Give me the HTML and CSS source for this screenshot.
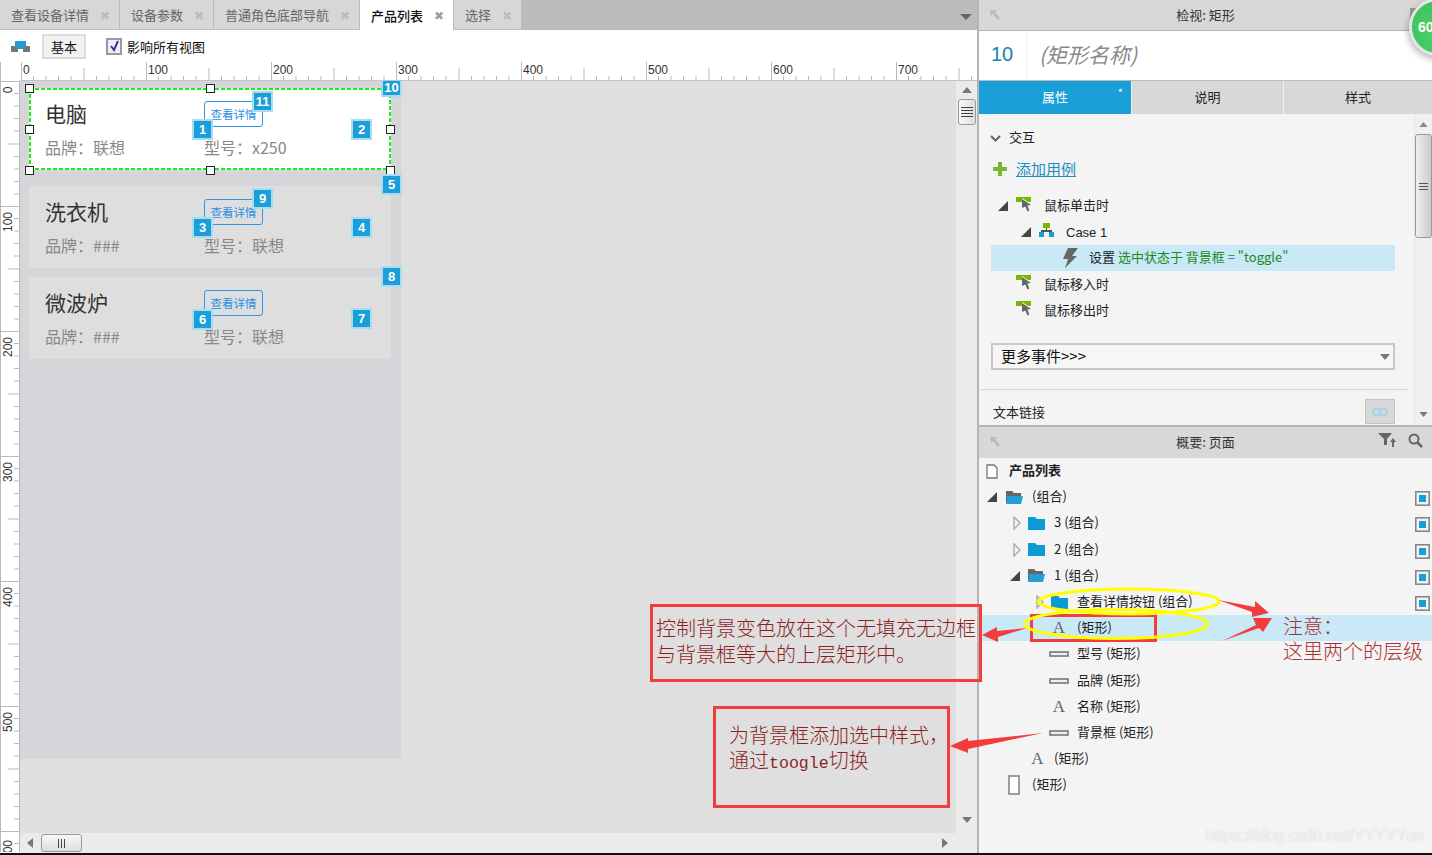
FILE: index.html
```html
<!DOCTYPE html>
<html lang="zh">
<head>
<meta charset="utf-8">
<title>产品列表</title>
<link rel="stylesheet" href="styles.css">
</head>
<body>
<svg class="defs" width="0" height="0">
  <symbol id="folder" viewBox="0 0 17 15"><path d="M0 1h7l2 2h8v11H0z" fill="#0a9ad6"/></symbol>
  <symbol id="folder-open" viewBox="0 0 17 15"><path d="M0 1h6l2 2h7v3H0z" fill="#666"/><path d="M1 6h16l-2 8H0z" fill="#239fd8"/><path d="M0 3h1v9H0z" fill="#666"/></symbol>
  <symbol id="evt" viewBox="0 0 15 15"><path d="M0 0h15v5H12L6 1v4H0z" fill="#7ab800"/><path d="M6 2l9 6-3.6.6 2 5-2 .9-2-5L6 11z" fill="#666"/></symbol>
  <symbol id="tri-open" viewBox="0 0 10 10"><path d="M10 0v10H0z" fill="#444"/></symbol>
  <symbol id="tri-closed" viewBox="0 0 8 14"><path d="M1 1l6 6-6 6z" fill="#f4f4f4" stroke="#aaa" stroke-width="1.4"/></symbol>
  <symbol id="bar" viewBox="0 0 20 6"><rect x="1" y="1" width="18" height="4" fill="#eee" stroke="#777" stroke-width="1.6"/></symbol>
  <symbol id="eye" viewBox="0 0 15 15"><rect x=".8" y=".8" width="13.4" height="13.4" fill="#f4f4f4" stroke="#888" stroke-width="1.6"/><rect x="4" y="4" width="7" height="7" fill="#159fdc"/></symbol>
</svg>

<div class="app">
  <main class="left">
    <nav class="tabs">
      <div class="tab tab-a">查看设备详情<span class="x">✖</span></div>
      <div class="tab tab-b">设备参数<span class="x">✖</span></div>
      <div class="tab tab-c">普通角色底部导航<span class="x">✖</span></div>
      <div class="tab tab-d tab-on">产品列表<span class="x">✖</span></div>
      <div class="tab tab-e">选择<span class="x">✖</span></div>
      <div class="tabs-fill"><svg class="tabs-arrow" width="12" height="6" viewBox="0 0 12 6"><path d="M0 0h12L6 6z" fill="#666"/></svg></div>
    </nav>

    <div class="toolbar">
      <svg class="tool-ico" width="19" height="11" viewBox="0 0 19 11"><path d="M4 0h11v5H4z" fill="#1a9fd9"/><path d="M0 5h7v6H0zM12 5h7v6h-7z" fill="#777"/><path d="M7 5h5v3H7z" fill="#1a9fd9"/></svg>
      <div class="tool-btn">基本</div>
      <div class="check"><svg width="11" height="12" viewBox="0 0 11 12"><path d="M2 6l3 4 4-9" fill="none" stroke="#2b3a8c" stroke-width="2"/></svg></div>
      <span class="check-label">影响所有视图</span>
    </div>

    <div class="ruler-top-row">
      <div class="ruler-corner"></div>
      <svg class="ruler-h" width="957" height="19">
        <defs><pattern id="ph" width="125" height="19" patternUnits="userSpaceOnUse" x="1">
          <path d="M.5 0v19M63 6v13M12.5 14v5M25 14v5M37.5 14v5M50 14v5M75.500 14v5M88 14v5M100.500 14v5M113 14v5" stroke="#b9b9b9" fill="none"/>
        </pattern></defs>
        <rect width="957" height="18" fill="url(#ph)"/>
        <path d="M0 18.500h957" stroke="#c4c4c4"/>
        <text x="3" y="12">0</text><text x="128" y="12">100</text><text x="253" y="12">200</text><text x="378" y="12">300</text><text x="503" y="12">400</text><text x="628" y="12">500</text><text x="753" y="12">600</text><text x="878" y="12">700</text>
      </svg>
    </div>

    <div class="work">
      <svg class="ruler-v" width="20" height="771">
        <defs><pattern id="pv" width="20" height="125" patternUnits="userSpaceOnUse">
          <path d="M1 .5h18M8 63h11M14 12.500h5M14 25h5M14 37.500h5M14 50h5M14 75.500h5M14 88h5M14 100.500h5M14 113h5" stroke="#b9b9b9" fill="none"/>
        </pattern></defs>
        <rect width="20" height="771" fill="url(#pv)"/>
        <path d="M.5 0v771M19.500 0v771" stroke="#b9b9b9"/>
        <text transform="translate(12 9) rotate(-90)">0</text>
        <text transform="translate(12 141) rotate(-90)">100</text>
        <text transform="translate(12 266) rotate(-90)">200</text>
        <text transform="translate(12 391) rotate(-90)">300</text>
        <text transform="translate(12 516) rotate(-90)">400</text>
        <text transform="translate(12 641) rotate(-90)">500</text>
        <text transform="translate(12 769) rotate(-90)">600</text>
      </svg>

      <div class="canvas-col">
        <div class="canvas-row">
          <div class="canvas">
            <div class="artboard">
              <section class="card card-on">
                <h3 class="card-title">电脑</h3>
                <div class="view-btn">查看详情</div>
                <p class="card-sub">品牌：联想</p>
                <p class="card-sub">型号：x250</p>
              </section>
              <section class="card card-mid">
                <h3 class="card-title">洗衣机</h3>
                <div class="view-btn">查看详情</div>
                <p class="card-sub">品牌：###</p>
                <p class="card-sub">型号：联想</p>
              </section>
              <section class="card">
                <h3 class="card-title">微波炉</h3>
                <div class="view-btn">查看详情</div>
                <p class="card-sub">品牌：###</p>
                <p class="card-sub">型号：联想</p>
              </section>
            </div>

            <i class="handle h1"></i><i class="handle h2"></i><i class="handle h3"></i><i class="handle h4"></i>
            <i class="handle h5"></i><i class="handle h6"></i><i class="handle h7"></i><i class="handle h8"></i>

            <b class="badge b1">1</b><b class="badge b2">2</b><b class="badge b3">3</b><b class="badge b4">4</b>
            <b class="badge b5">5</b><b class="badge b6">6</b><b class="badge b7">7</b><b class="badge b8">8</b>
            <b class="badge b9">9</b><b class="badge b10">10</b><b class="badge b11">11</b>
          </div>
          <div class="vscroll">
            <svg width="10" height="6" viewBox="0 0 10 6"><path d="M5 0l5 6H0z" fill="#777"/></svg>
            <div class="vthumb"><span></span><span></span><span></span><span></span></div>
            <div class="spacer"></div>
            <svg width="10" height="6" viewBox="0 0 10 6"><path d="M5 6l5-6H0z" fill="#777"/></svg>
          </div>
        </div>
        <div class="hscroll">
          <svg width="6" height="10" viewBox="0 0 6 10"><path d="M0 5l6 5V0z" fill="#777"/></svg>
          <div class="hthumb"><span></span><span></span><span></span></div>
          <div class="spacer"></div>
          <svg width="6" height="10" viewBox="0 0 6 10"><path d="M6 5L0 10V0z" fill="#777"/></svg>
        </div>
      </div>
    </div>
  </main>

  <aside class="right">
    <header class="panel-head">
      <svg class="corner-ico" width="10" height="10" viewBox="0 0 10 10"><path d="M0 0h7L5 2l5 6-2 2-5-6-2 2z" fill="#bbb"/></svg>
      <span>检视: 矩形</span>
    </header>
    <div class="name-row">
      <div class="name-num">10</div>
      <div class="name-text">(矩形名称)</div>
    </div>
    <div class="prop-tabs">
      <div class="prop-tab prop-on">属性<span class="star">*</span></div>
      <div class="prop-tab prop-2">说明</div>
      <div class="prop-tab prop-3">样式</div>
    </div>

    <div class="prop-body">
      <div class="prop-main">
        <div class="sec-head">
          <svg width="11" height="7" viewBox="0 0 11 7"><path d="M1 1l4.500 4.500L10 1" fill="none" stroke="#666" stroke-width="2"/></svg>
          <span>交互</span>
        </div>
        <div class="add-row">
          <svg width="14" height="14" viewBox="0 0 14 14"><path d="M5 0h4v5h5v4H9v5H5V9H0V5h5z" fill="#7ab62e"/></svg>
          <a class="add-link">添加用例</a>
        </div>
        <div class="evt-row evt-first"><svg class="tri" width="10" height="10"><use href="#tri-open"/></svg><svg class="evt-ico" width="15" height="15"><use href="#evt"/></svg><span>鼠标单击时</span></div>
        <div class="case-row"><svg class="tri" width="10" height="10"><use href="#tri-open"/></svg>
          <svg class="case-ico" width="15" height="14" viewBox="0 0 15 14"><path d="M4 0h7v5H4z" fill="#7ab800"/><path d="M7 5h1v3H7zM2 7h11v2H2z" fill="#555"/><path d="M0 9h5v5H0zM10 9h5v5h-5z" fill="#159fdc"/></svg>
          <span>Case 1</span></div>
        <div class="act-row">
          <svg class="bolt" width="15" height="20" viewBox="0 0 15 20"><path d="M5 0h10L9 8h5L2 20l3-9H0z" fill="#666"/></svg>
          <span>设置 <em>选中状态于 背景框 = "toggle"</em></span>
        </div>
        <div class="evt-row evt-plain"><svg class="evt-ico" width="15" height="15"><use href="#evt"/></svg><span>鼠标移入时</span></div>
        <div class="evt-row evt-plain"><svg class="evt-ico" width="15" height="15"><use href="#evt"/></svg><span>鼠标移出时</span></div>
        <div class="select"><span>更多事件&gt;&gt;&gt;</span><svg width="10" height="6" viewBox="0 0 10 6"><path d="M0 0h10L5 6z" fill="#777"/></svg></div>
        <div class="prop-rule"></div>
        <div class="link-row"><span>文本链接</span>
          <div class="link-btn"><svg width="16" height="8" viewBox="0 0 16 8"><rect x="1" y="1" width="8" height="6" rx="3" fill="none" stroke="#a9d4e6" stroke-width="2"/><rect x="7" y="1" width="8" height="6" rx="3" fill="none" stroke="#a9d4e6" stroke-width="2"/></svg></div>
        </div>
      </div>
      <div class="prop-scroll">
        <svg width="9" height="5" viewBox="0 0 10 6"><path d="M5 0l5 6H0z" fill="#888"/></svg>
        <div class="prop-thumb"><span></span><span></span><span></span></div>
        <div class="spacer"></div>
        <svg width="9" height="5" viewBox="0 0 10 6"><path d="M5 6l5-6H0z" fill="#777"/></svg>
      </div>
    </div>

    <header class="panel-head panel-head-2">
      <svg class="corner-ico" width="10" height="10" viewBox="0 0 10 10"><path d="M0 0h7L5 2l5 6-2 2-5-6-2 2z" fill="#bbb"/></svg>
      <span>概要: 页面</span>
      <svg class="filter-ico" width="18" height="14" viewBox="0 0 18 14"><path d="M0 0h14L9 6v6H6V6z" fill="#666"/><path d="M14 14V9h-2l3-4 3 4h-2v5z" fill="#666"/></svg>
      <svg class="search-ico" width="15" height="15" viewBox="0 0 15 15"><circle cx="6" cy="6" r="4.500" fill="none" stroke="#666" stroke-width="2"/><path d="M9.500 9.500L14 14" stroke="#666" stroke-width="2.500"/></svg>
    </header>

    <ul class="tree">
      <li class="row row-page"><svg width="12" height="15" viewBox="0 0 12 15"><path d="M1 1h7l3 3v10H1z" fill="#fff" stroke="#777" stroke-width="1.300"/></svg><strong>产品列表</strong></li>
      <li class="row l0"><svg class="tw" width="10" height="10"><use href="#tri-open"/></svg><svg class="fd" width="17" height="15"><use href="#folder-open"/></svg><span>(组合)</span><svg class="eye" width="15" height="15"><use href="#eye"/></svg></li>
      <li class="row l1"><svg class="tw" width="8" height="14"><use href="#tri-closed"/></svg><svg class="fd" width="17" height="15"><use href="#folder"/></svg><span>3 (组合)</span><svg class="eye" width="15" height="15"><use href="#eye"/></svg></li>
      <li class="row l1"><svg class="tw" width="8" height="14"><use href="#tri-closed"/></svg><svg class="fd" width="17" height="15"><use href="#folder"/></svg><span>2 (组合)</span><svg class="eye" width="15" height="15"><use href="#eye"/></svg></li>
      <li class="row l1b"><svg class="tw" width="10" height="10"><use href="#tri-open"/></svg><svg class="fd" width="17" height="15"><use href="#folder-open"/></svg><span>1 (组合)</span><svg class="eye" width="15" height="15"><use href="#eye"/></svg></li>
      <li class="row l2"><svg class="tw" width="8" height="14"><use href="#tri-closed"/></svg><svg class="fd" width="17" height="15"><use href="#folder"/></svg><span>查看详情按钮 (组合)</span><svg class="eye" width="15" height="15"><use href="#eye"/></svg></li>
      <li class="row leaf row-sel"><i class="glyph-a">A</i><span>(矩形)</span></li>
      <li class="row leaf"><svg class="bar" width="20" height="6"><use href="#bar"/></svg><span>型号 (矩形)</span></li>
      <li class="row leaf"><svg class="bar" width="20" height="6"><use href="#bar"/></svg><span>品牌 (矩形)</span></li>
      <li class="row leaf"><i class="glyph-a">A</i><span>名称 (矩形)</span></li>
      <li class="row leaf"><svg class="bar" width="20" height="6"><use href="#bar"/></svg><span>背景框 (矩形)</span></li>
      <li class="row leaf-1"><i class="glyph-a">A</i><span>(矩形)</span></li>
      <li class="row leaf-0"><svg width="12" height="20" viewBox="0 0 12 20"><rect x="1" y="1" width="10" height="18" fill="#fff" stroke="#888" stroke-width="1.600"/></svg><span>(矩形)</span></li>
    </ul>
  </aside>
</div>

<div class="stat-chip"></div>
<div class="stat-ball">60</div>

<div class="note note-a">控制背景变色放在这个无填充无边框<br>与背景框等大的上层矩形中。</div>
<div class="note note-b">为背景框添加选中样式，<br>通过<span class="mono">toogle</span>切换</div>
<div class="note-c">注意：<br>这里两个的层级</div>
<div class="red-box"></div>

<svg class="marks" width="1432" height="855" viewBox="0 0 1432 855">
  <ellipse cx="1129" cy="601.500" rx="90.500" ry="12.500" fill="none" stroke="#ffff00" stroke-width="3"/>
  <ellipse cx="1116" cy="624" rx="91.500" ry="14.500" fill="none" stroke="#ffff00" stroke-width="3"/>
  <g fill="#f33d3d">
    <polygon points="1218,600 1255,607 1255,601 1269,613 1252,617 1252,612"/>
    <polygon points="1222,641 1256,625 1253,618 1272,618 1263,632 1259,628"/>
    <polygon points="982,635 997,627 997,631 1027,628 998,637 998,642"/>
    <polygon points="950,746 968,738 968,741 1043,733 968,749 968,753"/>
  </g>
</svg>

<div class="watermark">https://blog.csdn.net/YYYYYun</div>
<div class="bottom-line"></div>
</body>
</html>
```
FILE: styles.css
```css
* { box-sizing: border-box; }
html, body { margin: 0; padding: 0; }
body {
  width: 1432px; height: 855px; overflow: hidden; position: relative;
  font-family: "Noto Sans CJK SC", "Liberation Sans", sans-serif;
  font-size: 13px; color: #222; background: #f4f4f4;
}
.defs { position: absolute; }
.spacer { flex: 1; }
.app { display: flex; height: 853px; }

/* left */
.left { width: 979px; flex: none; display: flex; flex-direction: column; border-right: 2px solid #b4b4b4; background: #fff; }
.tabs { display: flex; height: 30px; background: #bcbcbc; flex: none; }
.tab {
  display: flex; align-items: center; justify-content: space-between;
  padding: 0 9px 0 11px; background: #d7d7d7; border-right: 1px solid #bcbcbc;
  border-bottom: 1px solid #bcbcbc; color: #666; font-size: 13px; line-height: 1;
}
.tab-a { width: 120px; } .tab-b { width: 94px; } .tab-c { width: 146px; } .tab-d { width: 94px; } .tab-e { width: 68px; }
.tab-on { background: #fff; color: #111; font-weight: 500; border-bottom: 0; }
.x { font-size: 12px; color: #bcbcbc; }
.tab-on .x { color: #a0a0a0; }
.tabs-fill { flex: 1; display: flex; justify-content: flex-end; align-items: center; padding: 3px 5px 0 0; }
.toolbar { height: 32px; display: flex; align-items: center; background: #fff; flex: none; padding-left: 11px; }
.tool-btn {
  margin-left: 12px; width: 44px; height: 25px; border: 2px solid #dcdcdc; background: #f2f2f2;
  display: flex; align-items: center; justify-content: center; color: #111; font-size: 13px;
}
.check {
  margin-left: 20px; width: 16px; height: 17px; border: 2px solid #999; background: #eef;
  display: flex; align-items: center; justify-content: center;
}
.check-label { margin-left: 5px; color: #111; font-size: 13px; }
.ruler-top-row { display: flex; height: 19px; background: #fff; flex: none; }
.ruler-corner { width: 20px; border-left: 1px solid #b9b9b9; }
.ruler-h text, .ruler-v text { font: 12px "Liberation Sans", sans-serif; fill: #333; }
.ruler-v text { text-anchor: middle; }
.work { flex: 1; display: flex; min-height: 0; }
.ruler-v { flex: none; display: block; background: #fff; }
.canvas-col { flex: 1; display: flex; flex-direction: column; min-width: 0; }
.canvas-row { flex: 1; display: flex; min-height: 0; }
.canvas { flex: 1; position: relative; background: #dfdfdf; overflow: hidden; }
.artboard { width: 381px; height: 678px; background: #d6d6da; padding: 7px 10px 0 9px; }
.card {
  height: 82px; background: #dedede; padding: 10px 0 0 16px;
  display: grid; grid-template-columns: 159px 1fr; grid-template-rows: 32px 1fr; align-items: center;
}
.card-on {
  margin-bottom: 16px;
  background:
    linear-gradient(90deg, #18ee18 4.500px, transparent 4.500px) 0 0 / 6px 2px repeat-x,
    linear-gradient(90deg, #18ee18 4.500px, transparent 4.500px) 0 100% / 6px 2px repeat-x,
    linear-gradient(#18ee18 4.500px, transparent 4.500px) 0 0 / 2px 6px repeat-y,
    linear-gradient(#18ee18 4.500px, transparent 4.500px) 100% 0 / 2px 6px repeat-y,
    #fff;
}
.card-mid { margin-bottom: 9px; }
.card-title { margin: 0 0 2px; font-size: 21px; font-weight: 400; color: #333; line-height: 1; }
.card-sub { margin: 0 0 5px; font-size: 16px; color: #888; line-height: 1.2; }
.view-btn {
  width: 59px; height: 26px; border: 1px solid #2d96e8; border-radius: 3px; color: #2b8fe6;
  font-size: 11.500px; display: flex; align-items: center; justify-content: center; background: transparent;
}
.card-on .view-btn { background: #fff; }
.handle { position: absolute; width: 9px; height: 9px; border: 1.500px solid #222; background: #fff; }
.h1 { left: 5px; top: 3px; } .h2 { left: 186px; top: 3px; } .h3 { left: 366px; top: 3px; }
.h4 { left: 5px; top: 44px; } .h5 { left: 366px; top: 44px; }
.h6 { left: 5px; top: 85px; } .h7 { left: 186px; top: 85px; } .h8 { left: 366px; top: 85px; }
.badge {
  position: absolute; width: 21px; height: 21px; background: #1a9fd9; border: 2px solid #a8dcf0;
  color: #fff; font: 700 13px/17px "Liberation Sans", sans-serif; text-align: center;
}
.b1 { left: 172px; top: 38px; } .b2 { left: 331px; top: 38px; } .b3 { left: 172px; top: 136px; }
.b4 { left: 331px; top: 136px; } .b5 { left: 361px; top: 93px; } .b6 { left: 172px; top: 228px; }
.b7 { left: 331px; top: 227px; } .b8 { left: 361px; top: 185px; } .b9 { left: 232px; top: 107px; }
.b10 { left: 361px; top: 0; height: 16px; line-height: 13px; border-top: 0; } .b11 { left: 232px; top: 10px; }
.vscroll { width: 21px; background: #ebebeb; display: flex; flex-direction: column; align-items: center; padding: 6px 0 10px; flex: none; }
.vthumb {
  margin-top: 6px; width: 18px; height: 26px; border: 1px solid #999; border-radius: 3px;
  background: linear-gradient(90deg, #f8f8f8, #ddd); display: flex; flex-direction: column; gap: 2px; align-items: center; justify-content: center;
}
.vthumb span { width: 12px; height: 1px; background: #444; }
.hscroll { height: 20px; background: #ebebeb; display: flex; align-items: center; padding: 0 29px 0 7px; flex: none; }
.hthumb {
  margin-left: 8px; width: 41px; height: 18px; border: 1px solid #999; border-radius: 3px;
  background: linear-gradient(#f8f8f8, #ddd); display: flex; gap: 2px; align-items: center; justify-content: center;
}
.hthumb span { width: 1px; height: 9px; background: #444; }

/* right */
.right { width: 453px; flex: none; display: flex; flex-direction: column; background: #f4f4f4; }
.panel-head {
  height: 31px; flex: none; background: #d8d8d8; border-bottom: 1px solid #b4b4b4; position: relative;
  display: flex; align-items: center; justify-content: center; color: #333; font-size: 13px; padding-bottom: 2px;
}
.corner-ico { position: absolute; left: 11px; top: 10px; }
.name-row { height: 50px; flex: none; background: #fff; display: flex; align-items: center; border-bottom: 1px solid #bdbdbd; }
.name-num { width: 48px; height: 100%; display: flex; align-items: center; padding: 0 0 3px 12px; border-right: 1px solid #f4f4f4; color: #1583b8; font: 20px "Liberation Sans", sans-serif; }
.name-text { margin: 0 0 4px 12px; font-style: italic; font-size: 21px; color: #888; }
.prop-tabs { height: 33px; flex: none; display: flex; gap: 1px; background: #f0f0f0; }
.prop-tab { background: #d8d8d8; display: flex; align-items: center; justify-content: center; color: #222; font-size: 13px; position: relative; padding-bottom: 2px; }
.prop-on { background: #1a9fd9; color: #fff; width: 152px; }
.prop-2 { width: 151px; }
.prop-3 { flex: 1; }
.star { position: absolute; right: 8px; top: 3px; font-size: 11px; }
.prop-body { height: 311px; flex: none; display: flex; overflow: hidden; }
.prop-main { width: 435px; flex: none; display: flex; flex-direction: column; padding-top: 15px; }
.prop-main span { position: relative; top: -1.500px; }
.prop-main .evt-plain span { top: -.5px; }
.prop-main .case-row span, .prop-main .link-row span { top: 0; }
.sec-head { display: flex; align-items: center; height: 18px; padding-left: 11px; gap: 8px; color: #222; }
.add-row { display: flex; align-items: center; height: 20px; margin-top: 12px; padding-left: 14px; gap: 9px; }
.add-link { color: #1a8fc0; text-decoration: underline; font-size: 15px; position: relative; top: -1px; }
.evt-row { display: flex; align-items: center; height: 26px; color: #222; }
.evt-first { margin-top: 14px; padding-left: 19px; }
.evt-plain { padding-left: 37px; }
.evt-first .evt-ico { margin-left: 8px; }
.evt-ico { margin-right: 13px; flex: none; position: relative; top: -2px; }
.case-row { display: flex; align-items: center; height: 26px; padding-left: 42px; color: #222; font-family: "Liberation Sans", sans-serif; }
.case-ico { margin: 0 12px 0 8px; position: relative; top: -2px; }
.act-row { margin-left: 12px; width: 404px; height: 26px; background: #c9e9f7; display: flex; align-items: center; padding-left: 72px; color: #222; }
.bolt { margin-right: 11px; flex: none; }
.act-row em { font-style: normal; color: #1a8a1a; }
.select {
  margin: 20px 0 0 12px; width: 404px; height: 27px; border: 2px solid #c8c8c8; background: #f6f6f6;
  display: flex; align-items: center; justify-content: space-between; padding: 0 3px 0 8px; color: #111; font-size: 15px; line-height: 1;
}
.prop-rule { margin-top: 19px; height: 1px; background: #d6d6d6; margin-left: 1px; width: 428px; }
.link-row { display: flex; align-items: center; justify-content: space-between; margin: 9px 0 0 14px; width: 402px; color: #222; }
.link-btn { width: 30px; height: 25px; background: #d8d8d8; border: 1px solid #c4c4c4; display: flex; align-items: center; justify-content: center; }
.prop-scroll { flex: 1; display: flex; flex-direction: column; align-items: center; padding: 8px 0 8px; background: #f0f0f0; border-left: 1px solid #e6e6e6; }
.prop-thumb {
  margin-top: 7px; width: 17px; height: 104px; border: 1px solid #999; border-radius: 3px;
  background: linear-gradient(90deg, #eee, #ccc); display: flex; flex-direction: column; gap: 2px; align-items: center; justify-content: center;
}
.prop-thumb span { width: 9px; height: 1px; background: #555; }
.panel-head-2 { border-bottom: 0; border-top: 2px solid #b4b4b4; height: 33px; }
.filter-ico { position: absolute; left: 399px; top: 6px; }
.search-ico { position: absolute; left: 429px; top: 6px; }
.tree { list-style: none; margin: 0; padding: 0; }
.row { height: 26.200px; display: flex; align-items: center; position: relative; color: #222; font-size: 13px; line-height: 1; }
.row > span, .row > strong { position: relative; top: -1.500px; }
.row-page { padding-left: 7px; gap: 11px; }
.row-page strong { font-weight: 700; }
.eye { position: absolute; left: 436px; top: 7px; }
.tw { flex: none; }
.fd { flex: none; }
.l0 { padding-left: 8px; } .l0 .fd { margin: 0 9px 0 9px; }
.l1 { padding-left: 34px; } .l1 .fd { margin: 0 9px 0 7px; }
.l1b { padding-left: 31px; } .l1b .fd { margin: 0 9px 0 8px; }
.l2 { padding-left: 57px; } .l2 .fd { margin: 0 9px 0 7px; }
.leaf { padding-left: 70px; }
.leaf .glyph-a, .leaf .bar { margin-right: 8px; flex: none; }
.leaf .glyph-a { width: 20px; text-align: center; }
.leaf-1 { padding-left: 52px; } .leaf-1 .glyph-a { width: 13px; margin-right: 10px; text-align: center; }
.leaf-0 { padding-left: 29px; } .leaf-0 svg { margin-right: 12px; }
.glyph-a { font: normal 17px "Liberation Serif", serif; color: #666; }
.row-sel { background: #c9e9f7; }

/* overlays */
.stat-chip { position: absolute; left: 1410px; top: 8px; width: 22px; height: 28px; background: #999; }
.stat-ball {
  position: absolute; left: 1409px; top: -2px; width: 58px; height: 58px; border-radius: 50%;
  background: radial-gradient(circle at 50% 60%, #4fd06a, #38c05a); border: 3px solid #e4e4e4;
  box-shadow: -1px 3px 7px rgba(0,0,0,.3); color: #fff; font: 700 14px/52px "Liberation Sans", sans-serif; padding-left: 6px;
}
.note { position: absolute; border: 3px solid #f33d3d; color: #8c1f1f; font-size: 20px; line-height: 26px; white-space: nowrap; font-weight: 300; }
.note-a { left: 650px; top: 604px; width: 332px; height: 78px; padding: 8px 0 0 3px; }
.note-b { left: 713px; top: 706px; width: 237px; height: 102px; padding: 13px 0 0 13px; line-height: 25px; }
.mono { font-family: "Liberation Mono", monospace; font-size: 16.600px; }
.note-c { position: absolute; left: 1283px; top: 613px; color: #a83232; font-size: 20px; line-height: 25px; font-weight: 300; white-space: nowrap; }
.red-box { position: absolute; left: 1030px; top: 614px; width: 127px; height: 28px; border: 3px solid #f33d3d; }
.marks { position: absolute; left: 0; top: 0; pointer-events: none; }
.watermark { position: absolute; left: 1206px; top: 826px; font: 16px/20px "Liberation Sans", sans-serif; color: rgba(255,255,255,.75); text-shadow: 0 0 1px rgba(150,150,150,.5); white-space: nowrap; }
.bottom-line { position: absolute; left: 0; top: 853px; width: 1432px; height: 2px; background: #111; }
```
